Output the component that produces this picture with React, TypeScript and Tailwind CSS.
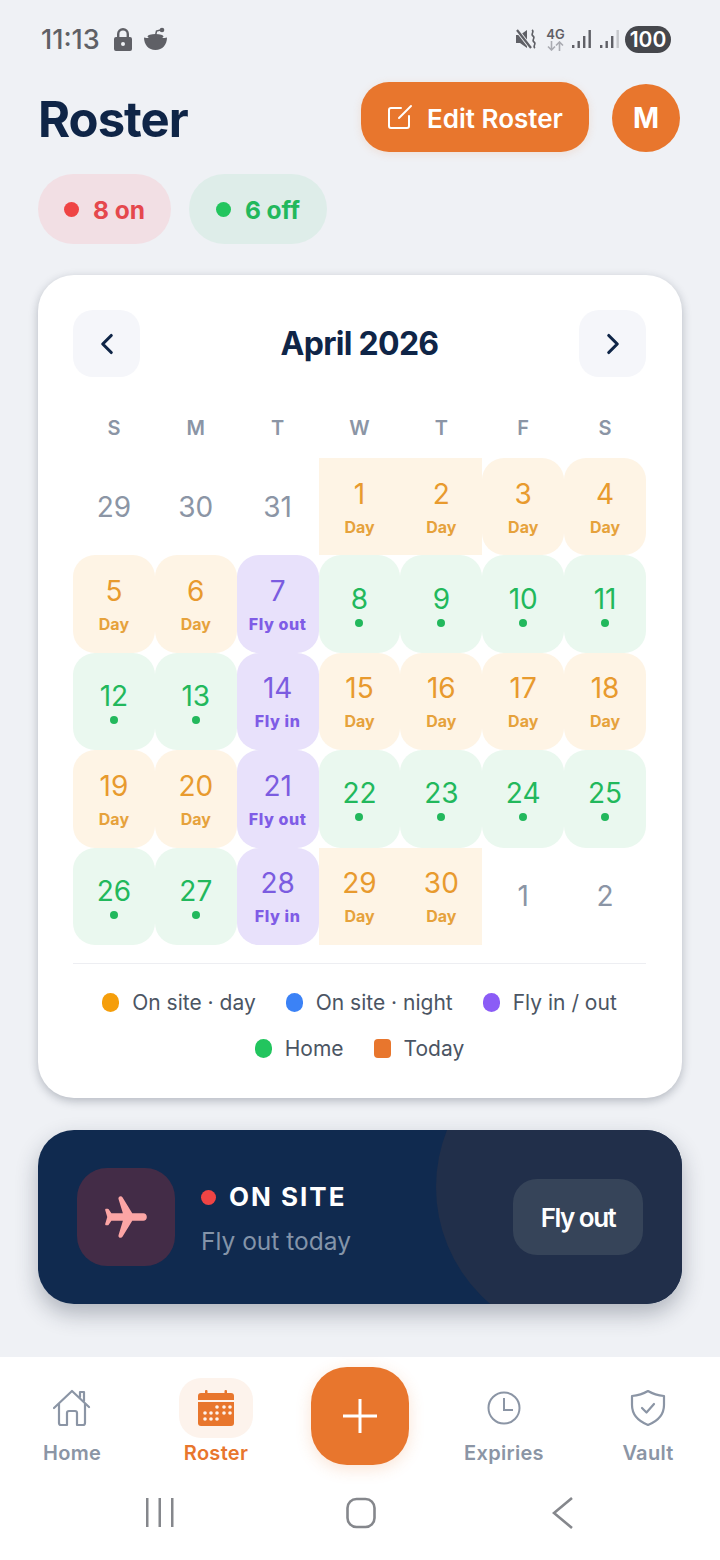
import { ChevronLeft, ChevronRight } from 'lucide-react'

type Kind = 'other' | 'day' | 'home' | 'fly'

type Cell = {
  n: number
  kind: Kind
  label?: string
  square?: boolean
}

const weekdays = ['S', 'M', 'T', 'W', 'T', 'F', 'S']

const day = (n: number, square = false): Cell => ({ n, kind: 'day', label: 'Day', square })
const home = (n: number): Cell => ({ n, kind: 'home' })
const fly = (n: number, label: string): Cell => ({ n, kind: 'fly', label })
const other = (n: number): Cell => ({ n, kind: 'other' })

const cells: Cell[] = [
  other(29), other(30), other(31), day(1, true), day(2, true), day(3), day(4),
  day(5), day(6), fly(7, 'Fly out'), home(8), home(9), home(10), home(11),
  home(12), home(13), fly(14, 'Fly in'), day(15), day(16), day(17), day(18),
  day(19), day(20), fly(21, 'Fly out'), home(22), home(23), home(24), home(25),
  home(26), home(27), fly(28, 'Fly in'), day(29, true), day(30, true), other(1), other(2),
]

const legend = [
  { label: 'On site · day', dot: 'bg-[#f59e0b] rounded-full' },
  { label: 'On site · night', dot: 'bg-[#3b82f6] rounded-full' },
  { label: 'Fly in / out', dot: 'bg-[#8b5cf6] rounded-full' },
  { label: 'Home', dot: 'bg-[#22c55e] rounded-full' },
  { label: 'Today', dot: 'bg-[#e8762d] rounded-[4px]' },
]

function DayCell({ cell }: { cell: Cell }) {
  if (cell.kind === 'other') {
    return (
      <div className="flex items-center justify-center text-[28px] leading-[34px] text-[#8b95a5]">
        {cell.n}
      </div>
    )
  }

  if (cell.kind === 'home') {
    return (
      <div className="flex flex-col items-center justify-center rounded-[22px] bg-[#eaf8ef]">
        <span className="text-[28px] leading-[34px] text-[#22b85c]">{cell.n}</span>
        <span className="mt-[3px] h-2 w-2 rounded-full bg-[#22b85c]" />
      </div>
    )
  }

  const isFly = cell.kind === 'fly'
  return (
    <div
      className={`flex flex-col items-center justify-center ${isFly ? 'bg-[#e8e1fb]' : 'bg-[#fef4e5]'} ${cell.square ? '' : 'rounded-[22px]'}`}
    >
      <span className={`text-[28px] leading-[34px] ${isFly ? 'text-[#7b5ce0]' : 'text-[#e89a2e]'}`}>
        {cell.n}
      </span>
      <span
        className={`mt-1.5 text-[16px] leading-5 ${isFly ? 'font-extrabold text-[#7f5ce6] tracking-[0.6px]' : 'font-bold text-[#e6a23c]'}`}
      >
        {cell.label}
      </span>
    </div>
  )
}

function StatusBar() {
  return (
    <div className="flex h-[78px] items-center justify-between pl-[41px] pr-[49px] text-[#5f6066]">
      <div className="flex items-center">
        <span className="text-[27px] font-medium leading-none">11:13</span>
        <svg className="ml-[13px] h-[24px] w-[20px]" viewBox="0 0 20 24" fill="currentColor">
          <path d="M4 10V7a6 6 0 0 1 12 0v3h-2.400V7a3.600 3.600 0 0 0-7.200 0v3z" />
          <path fillRule="evenodd" d="M3 10h14a2 2 0 0 1 2 2v10a2 2 0 0 1-2 2H3a2 2 0 0 1-2-2V12a2 2 0 0 1 2-2zm7 5a2 2 0 1 0 0 4 2 2 0 0 0 0-4z" />
        </svg>
        <svg className="ml-[10px] h-[24px] w-[25px]" viewBox="0 0 25 24" fill="currentColor">
          <path d="M1 10.500c3 .8 7 .4 11.500 .4 4.500 0 8.500 .4 11.500-.4 0 7-4.500 12.500-11.500 12.500S1 17.500 1 10.500z" />
          <path d="M12 11l1.500-7 4-1" fill="none" stroke="currentColor" strokeWidth="1.500" />
          <circle cx="19" cy="3" r="2.300" />
          <ellipse cx="12.500" cy="9.500" rx="8" ry="2.500" />
        </svg>
      </div>
      <div className="flex items-center">
        <svg className="h-[24px] w-[22px]" viewBox="0 0 22 24" fill="none">
          <path d="M1 8h4l7-5v18l-7-5H1z" fill="currentColor" />
          <path d="M2 3l14 18" stroke="#eff1f5" strokeWidth="4" />
          <path d="M2 3l14 18" stroke="currentColor" strokeWidth="2.200" />
          <path d="M17 3c3 2-2 4 1 6s-2 4 1 6-2 4 1 6" stroke="currentColor" strokeWidth="1.600" />
        </svg>
        <div className="ml-[10px] flex w-[17px] flex-col items-center">
          <span className="text-[13px] font-semibold leading-[13px]">4G</span>
          <svg className="h-[10px] w-[17px]" viewBox="0 0 17 10" fill="none" stroke="#a9abb1" strokeWidth="1.600">
            <path d="M4.500 0v9M1 5.500l3.500 3.500L8 5.500M12.500 10V1M9 4.500L12.500 1 16 4.500" />
          </svg>
        </div>
        <svg className="ml-[8px] h-[20px] w-[19px]" viewBox="0 0 19 20" fill="currentColor">
          <rect x="0" y="16" width="2.400" height="3" />
          <rect x="5.500" y="12" width="2.400" height="7" />
          <rect x="11" y="7" width="2.400" height="12" />
          <rect x="16.500" y="1" width="2.400" height="18" />
        </svg>
        <svg className="ml-[9px] h-[20px] w-[19px]" viewBox="0 0 19 20" fill="currentColor">
          <rect x="0" y="16" width="2.400" height="3" />
          <rect x="5.500" y="12" width="2.400" height="7" />
          <rect x="11" y="7" width="2.400" height="12" />
          <rect x="16.500" y="1" width="2.400" height="18" fill="#c6c8cc" />
        </svg>
        <div className="ml-[6px] flex h-[27px] w-[46px] items-center justify-center rounded-full bg-[#45474c] text-[21px] font-semibold leading-none text-white">
          100
        </div>
      </div>
    </div>
  )
}

function NavItem({ label, active, children }: { label: string; active?: boolean; children: React.ReactNode }) {
  return (
    <div className="flex flex-col items-center pt-[21px]">
      <div className={`flex h-[60px] w-[74px] items-center justify-center rounded-[22px] ${active ? 'bg-[#fdf3ec]' : ''}`}>
        {children}
      </div>
      <span className={`mt-[3px] text-[20px] font-semibold leading-6 tracking-[0.3px] ${active ? 'text-[#e8762d]' : 'text-[#8b95a5]'}`}>
        {label}
      </span>
    </div>
  )
}

export default function App() {
  return (
    <div className="flex h-[1560px] w-[720px] flex-col overflow-hidden bg-[#eff1f5] font-['Inter',sans-serif]">
      <StatusBar />

      <div className="px-[38px]">
        <div className="mt-1 flex h-[70px] items-center justify-between pr-[2px]">
          <h1 className="mt-1 text-[49px] font-bold leading-none tracking-[-1px] text-[#0f2547]">Roster</h1>
          <div className="flex items-center gap-[23px]">
            <button className="flex h-[70px] w-[228px] items-center justify-center gap-[14px] rounded-[28px] bg-[#e8762d] text-[26px] font-semibold text-white shadow-[0_2px_8px_rgba(232,118,45,0.15)]">
              <svg className="h-[26px] w-[26px]" viewBox="0 0 26 26" fill="none" stroke="currentColor" strokeWidth="2" strokeLinecap="round">
                <path d="M14 4H4a2 2 0 0 0-2 2v16a2 2 0 0 0 2 2h16a2 2 0 0 0 2-2V12" />
                <path d="M12 14L24 2" />
              </svg>
              <span className="pt-[2px]">Edit Roster</span>
            </button>
            <div className="mt-[2px] flex h-[68px] w-[68px] items-center justify-center rounded-full bg-[#e8762d] text-[28px] font-bold text-white">
              M
            </div>
          </div>
        </div>

        <div className="mt-[22px] flex gap-[18px]">
          <div className="flex h-[70px] w-[133px] items-center justify-center gap-[14px] rounded-full bg-[#f2dfe4] text-[24.500px] font-bold text-[#e5484d]">
            <span className="h-[15px] w-[15px] rounded-full bg-[#ef4444]" />
            <span className="pt-[2px]">8 on</span>
          </div>
          <div className="flex h-[70px] w-[138px] items-center justify-center gap-[14px] rounded-full bg-[#deede9] text-[24.500px] font-bold text-[#22b85c]">
            <span className="h-[15px] w-[15px] rounded-full bg-[#22c55e]" />
            <span className="pt-[2px]">6 off</span>
          </div>
        </div>

        <div className="mt-[31px] h-[823px] rounded-[36px] bg-white pl-[35px] pr-[36px] pt-[35px] shadow-[0_3px_10px_rgba(30,41,59,0.28)]">
          <div className="flex items-center justify-between">
            <button className="flex h-[67px] w-[67px] items-center justify-center rounded-[20px] bg-[#f5f6fa] text-[#0f2547]">
              <ChevronLeft size={34} strokeWidth={2.200} />
            </button>
            <span className="text-[32px] font-bold tracking-[-0.7px] text-[#0f2547]">April 2026</span>
            <button className="flex h-[67px] w-[67px] items-center justify-center rounded-[20px] bg-[#f5f6fa] text-[#0f2547]">
              <ChevronRight size={34} strokeWidth={2.200} />
            </button>
          </div>

          <div className="mt-[39px] grid grid-cols-7">
            {weekdays.map((d, i) => (
              <div key={i} className="text-center text-[20px] font-semibold leading-6 text-[#8b95a5]">
                {d}
              </div>
            ))}
          </div>

          <div className="mt-[18px] grid grid-cols-7 auto-rows-[97.4px]">
            {cells.map((c, i) => (
              <DayCell key={i} cell={c} />
            ))}
          </div>

          <div className="mt-[18px] border-t border-[#edeef2]" />

          <div className="mt-[26px] flex flex-wrap justify-center gap-x-[30px] gap-y-[21px]">
            {legend.map((l) => (
              <div key={l.label} className="flex items-center gap-[13px]">
                <span className={`h-[19px] w-[17px] ${l.dot}`} />
                <span className="text-[21px] leading-[25px] text-[#4b5563]">{l.label}</span>
              </div>
            ))}
          </div>
        </div>

        <div className="relative mt-[32px] flex h-[174px] items-center overflow-hidden rounded-[36px] bg-[#102a4f] pl-[39px] pr-[39px] shadow-[0_10px_22px_rgba(30,41,59,0.3)]">
          <div className="absolute right-[-60px] top-[-96px] h-[306px] w-[306px] rounded-full bg-[#212f4a]" />
          <div className="relative flex h-[98px] w-[98px] items-center justify-center rounded-[30px] bg-[#432c47]">
            <svg className="h-[50px] w-[50px] rotate-90 text-[#fca5a5]" viewBox="0 0 24 24" fill="currentColor">
              <path d="M21.500 13.700L13.800 9V3.700C13.800 2.700 13 2 12 2s-1.800.7-1.800 1.700V9l-7.700 4.700c-.3.200-.5.500-.5.900 0 .7.700 1.200 1.300 1l6.900-2.100V19l-2 1.400c-.1.100-.2.300-.2.400v.7c0 .3.300.6.600.5L12 21l3.400 1c.3.100.6-.2.600-.5v-.7c0-.1-.1-.3-.2-.4l-2-1.400v-5.500l6.900 2.100c.6.200 1.300-.3 1.300-1 0-.4-.2-.7-.5-.9z" />
            </svg>
          </div>
          <div className="relative ml-[26px] mt-1 flex flex-col">
            <div className="flex items-center gap-[13px]">
              <span className="h-[15px] w-[15px] rounded-full bg-[#ef4444]" />
              <span className="text-[26px] font-bold leading-8 tracking-[2px] text-white">ON SITE</span>
            </div>
            <span className="mt-[12px] text-[24.500px] leading-8 text-[#8494a9]">Fly out today</span>
          </div>
          <button className="relative ml-auto flex h-[76px] w-[130px] items-center justify-center rounded-[24px] bg-[#364459] text-[26px] font-semibold tracking-[-1.500px] text-white">
            Fly out
          </button>
        </div>
      </div>

      <div className="mt-auto h-[203px] bg-white">
        <div className="grid grid-cols-5">
          <NavItem label="Home">
            <svg className="h-[38px] w-[38px] text-[#8b95a5]" viewBox="0 0 38 38" fill="none" stroke="currentColor" strokeWidth="2.200" strokeLinejoin="round" strokeLinecap="round">
              <path d="M1 19L19 2l17 16" />
              <path d="M6 15v19a2 2 0 0 0 2 2h6V24a2 2 0 0 1 2-2h6a2 2 0 0 1 2 2v12h6a2 2 0 0 0 2-2V15" />
              <path d="M27 8V3h4v9" />
            </svg>
          </NavItem>
          <NavItem label="Roster" active>
            <svg className="h-[36px] w-[36px] text-[#e8762d]" viewBox="0 0 36 36" fill="currentColor">
              <rect x="7" y="0" width="2.500" height="6" rx="1" />
              <rect x="26.500" y="0" width="2.500" height="6" rx="1" />
              <path d="M3 3h30a3 3 0 0 1 3 3v4H0V6a3 3 0 0 1 3-3z" />
              <path fillRule="evenodd" d="M0 12h36v21a3 3 0 0 1-3 3H3a3 3 0 0 1-3-3z" />
              <g fill="#fdf3ec">
                <circle cx="19" cy="17" r="1.800" />
                <circle cx="26" cy="17" r="1.800" />
                <circle cx="32" cy="17" r="1.800" />
                <circle cx="7" cy="23" r="1.800" />
                <circle cx="13" cy="23" r="1.800" />
                <circle cx="19" cy="23" r="1.800" />
                <circle cx="26" cy="23" r="1.800" />
                <circle cx="32" cy="23" r="1.800" />
                <circle cx="7" cy="29" r="1.800" />
                <circle cx="13" cy="29" r="1.800" />
                <circle cx="19" cy="29" r="1.800" />
              </g>
            </svg>
          </NavItem>
          <div className="flex justify-center pt-[10px]">
            <div className="flex h-[98px] w-[98px] items-center justify-center rounded-[36px] bg-[#e8762d] shadow-[0_4px_16px_rgba(232,118,45,0.2)]">
              <svg className="h-[34px] w-[34px] text-white" viewBox="0 0 34 34" fill="none" stroke="currentColor" strokeWidth="3">
                <path d="M17 0v34M0 17h34" />
              </svg>
            </div>
          </div>
          <NavItem label="Expiries">
            <svg className="h-[34px] w-[34px] text-[#8b95a5]" viewBox="0 0 34 34" fill="none" stroke="currentColor" strokeWidth="2">
              <circle cx="17" cy="17" r="15.500" />
              <path d="M17 7v12h9" />
            </svg>
          </NavItem>
          <NavItem label="Vault">
            <svg className="h-[36px] w-[36px] text-[#8b95a5]" viewBox="0 0 36 36" fill="none" stroke="currentColor" strokeWidth="2.200" strokeLinejoin="round" strokeLinecap="round">
              <path d="M18 1c5 3 10 4.500 16 5v9c0 9-6 16-16 20C8 31 2 24 2 15V6c6-.5 11-2 16-5z" />
              <path d="M12 18l4.500 4.500L24 14" />
            </svg>
          </NavItem>
        </div>

        <div className="flex h-[95px] items-center pl-[146px] text-[#85878c]">
          <svg className="h-[30px] w-[28px]" viewBox="0 0 28 30" fill="currentColor">
            <rect x="0" y="0" width="2.500" height="29" />
            <rect x="12.500" y="0" width="2.500" height="29" />
            <rect x="25" y="0" width="2.500" height="29" />
          </svg>
          <svg className="ml-[172px] h-[32px] w-[30px]" viewBox="0 0 30 32" fill="none" stroke="currentColor" strokeWidth="2.600">
            <rect x="1.500" y="2" width="27" height="28" rx="9" />
          </svg>
          <svg className="ml-[176px] h-[32px] w-[22px]" viewBox="0 0 22 32" fill="none" stroke="currentColor" strokeWidth="2.600">
            <path d="M20 1L2 16l18 15" />
          </svg>
        </div>
      </div>
    </div>
  )
}
